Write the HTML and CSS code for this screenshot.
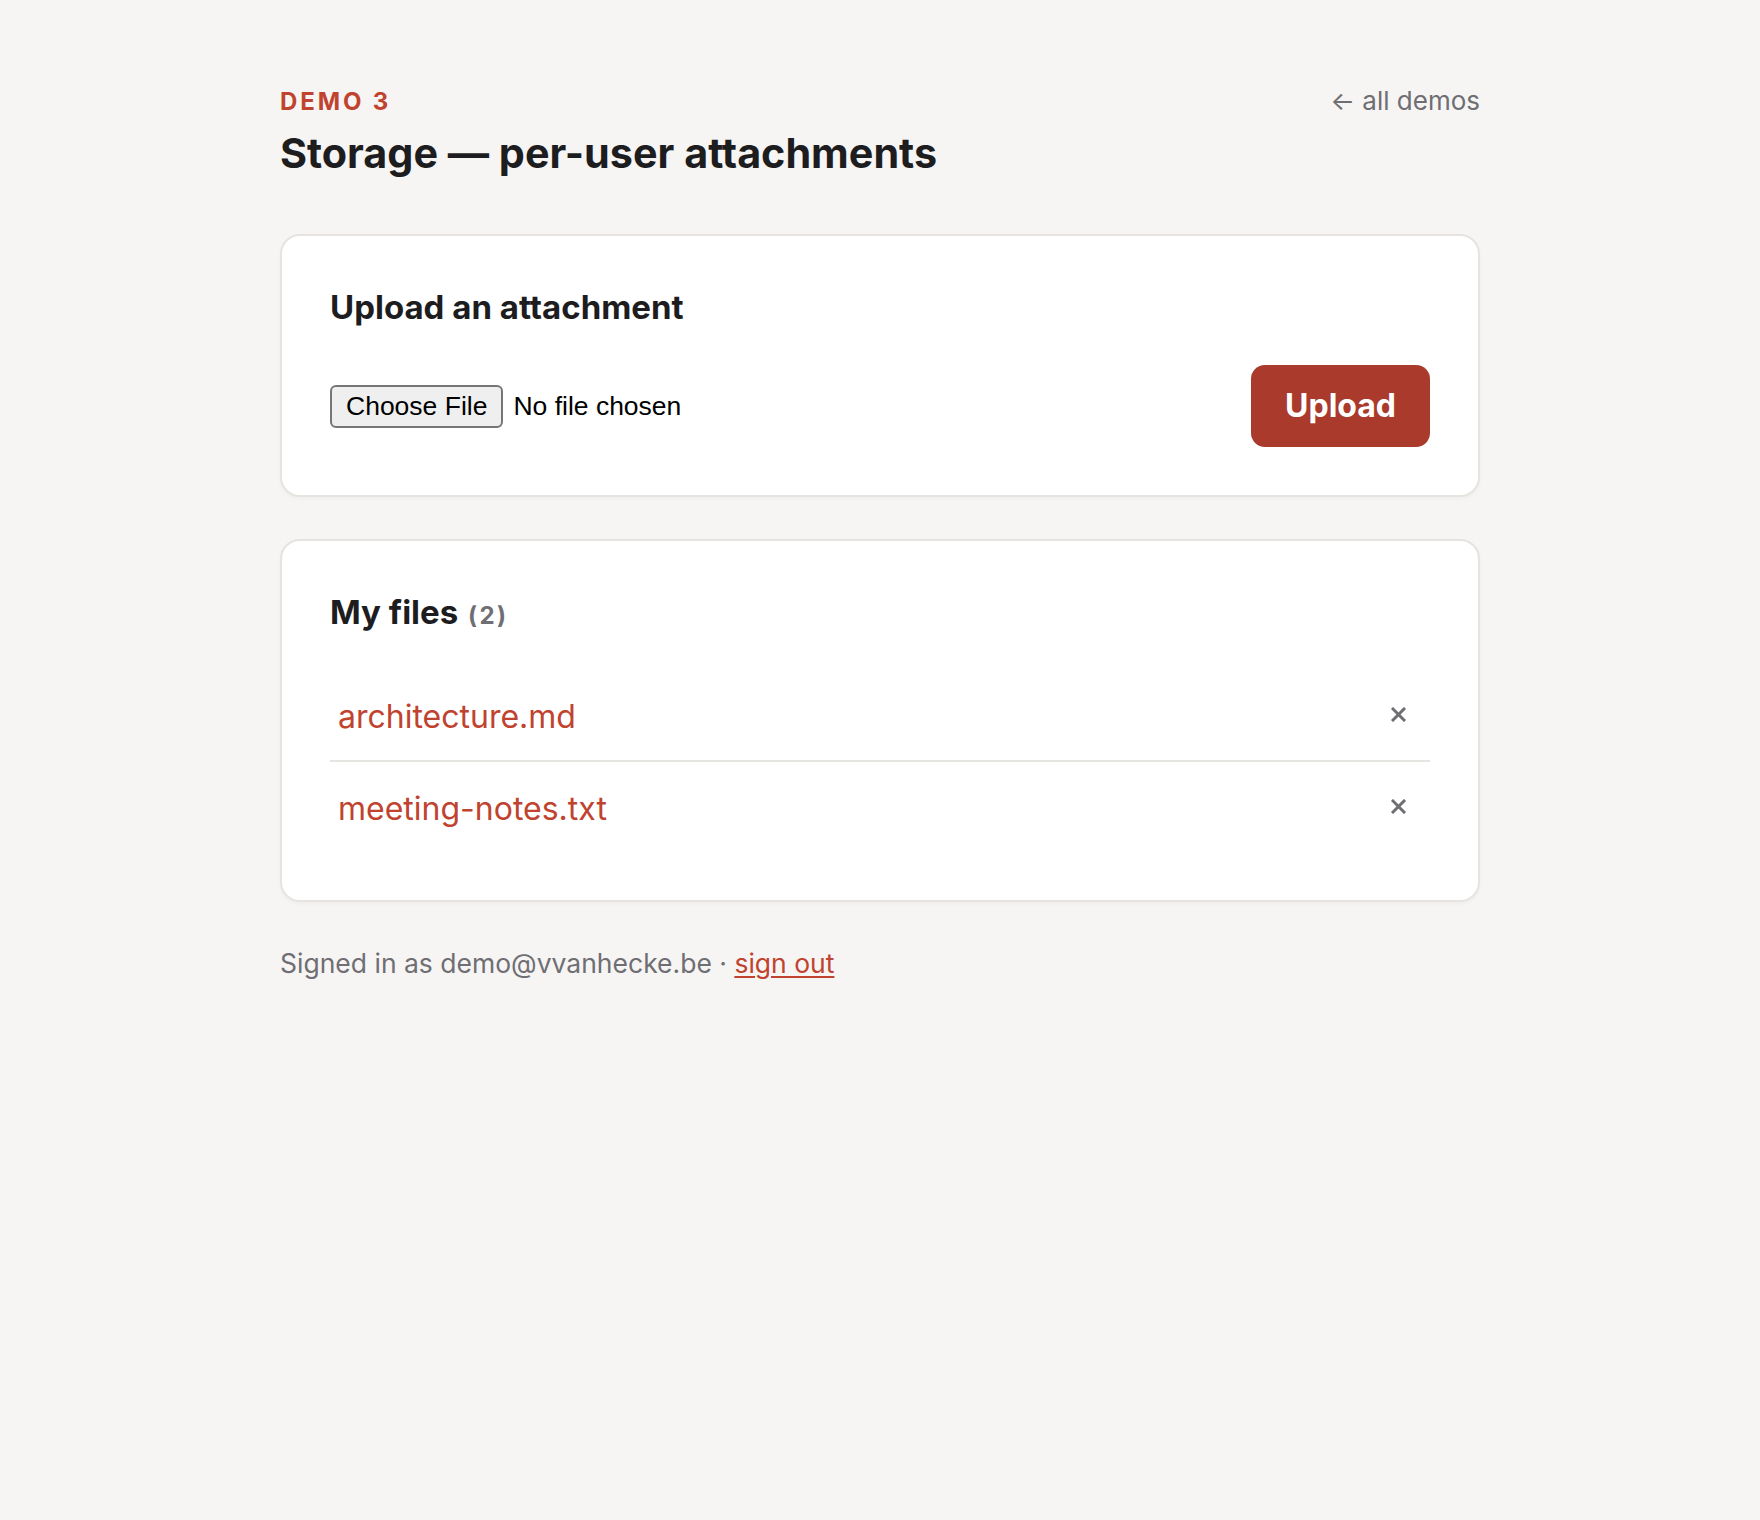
FILE: index.html
```html
<!DOCTYPE html>
<html lang="en">
<head>
    <meta charset="UTF-8">
    <meta name="viewport" content="width=device-width, initial-scale=1.0">
    <title>Storage — per-user attachments</title>
    <link rel="stylesheet" href="styles.css">
</head>
<body>
    <main class="page">
        <header class="page-header">
            <div class="page-title">
                <div class="eyebrow">Demo 3</div>
                <h1>Storage — per-user attachments</h1>
            </div>
            <a class="back-link" href="#">&larr; all demos</a>
        </header>

        <section class="card">
            <h2>Upload an attachment</h2>
            <form class="upload-row" onsubmit="return false">
                <input type="file" id="file-input">
                <button type="submit" class="btn-primary">Upload</button>
            </form>
        </section>

        <section class="card">
            <h2>My files <span class="count">(2)</span></h2>
            <ul class="file-list">
                <li class="file-item">
                    <a class="file-name" href="#">architecture.md</a>
                    <button class="btn-delete" title="Delete">
                        <svg width="15" height="15" viewBox="0 0 15 15" fill="none" stroke="currentColor" stroke-width="3" stroke-linecap="square">
                            <line x1="2" y1="2" x2="13" y2="13"></line>
                            <line x1="13" y1="2" x2="2" y2="13"></line>
                        </svg>
                    </button>
                </li>
                <li class="file-item">
                    <a class="file-name" href="#">meeting-notes.txt</a>
                    <button class="btn-delete" title="Delete">
                        <svg width="15" height="15" viewBox="0 0 15 15" fill="none" stroke="currentColor" stroke-width="3" stroke-linecap="square">
                            <line x1="2" y1="2" x2="13" y2="13"></line>
                            <line x1="13" y1="2" x2="2" y2="13"></line>
                        </svg>
                    </button>
                </li>
            </ul>
        </section>

        <p class="signed-in">Signed in as demo@vvanhecke.be &middot; <a href="#">sign out</a></p>
    </main>
</body>
</html>
```

FILE: styles.css
```css
:root {
    --bg-color: #f6f5f3;
    --card-color: #ffffff;
    --border-color: #e6e4e1;
    --text-color: #1d1d1f;
    --muted-color: #6e6e73;
    --accent-color: #c0432f;
    --button-color: #a93a2c;
}

body {
    margin: 0;
    background-color: var(--bg-color);
    color: var(--text-color);
    font-family: Inter, "Noto Sans", sans-serif;
}

.page {
    max-width: 1200px;
    margin: 0 auto;
    padding: 85px 0 80px;
}

.page-header {
    display: flex;
    justify-content: space-between;
    align-items: baseline;
    margin-bottom: 56px;
}

.eyebrow {
    font-size: 24px;
    line-height: 1.2;
    font-weight: 700;
    letter-spacing: 0.12em;
    text-transform: uppercase;
    color: var(--accent-color);
    margin-bottom: 12px;
}

.page-title h1 {
    margin: 0;
    font-size: 41.3px;
    line-height: 1.2;
    font-weight: 700;
}

.back-link {
    font-size: 26px;
    color: var(--muted-color);
    text-decoration: none;
}

.card {
    background-color: var(--card-color);
    border: 2px solid var(--border-color);
    border-radius: 20px;
    padding: 50px 48px 48px;
    box-shadow: 0 2px 4px rgba(0, 0, 0, 0.03);
}

.card + .card {
    margin-top: 42px;
}

.card h2 {
    margin: 0 0 36px;
    font-size: 33px;
    line-height: 1.3;
    font-weight: 700;
}

.count {
    margin-left: 2px;
    font-size: 24px;
    letter-spacing: 0.1em;
    color: var(--muted-color);
}

.upload-row {
    display: flex;
    justify-content: space-between;
    align-items: center;
}

#file-input {
    font-family: "Liberation Sans", Arial, sans-serif;
    font-size: 26.5px;
    color: #000;
}

#file-input::file-selector-button {
    font-family: "Liberation Sans", Arial, sans-serif;
    font-size: 26.5px;
    color: #000;
    background-color: #efefef;
    border: 2px solid #767676;
    border-radius: 6px;
    padding: 4px 14px;
    margin-right: 10px;
}

.btn-primary {
    font-family: Inter, "Noto Sans", sans-serif;
    font-size: 32px;
    line-height: 42px;
    font-weight: 700;
    color: #fff;
    background-color: var(--button-color);
    border: none;
    border-radius: 14px;
    padding: 20px 34px;
    cursor: pointer;
}

.file-list {
    list-style: none;
    margin: 0;
    padding: 0;
}

.file-item {
    display: flex;
    justify-content: space-between;
    align-items: center;
    padding: 16px 8px 18px;
    border-bottom: 2px solid var(--border-color);
}

.file-item:last-child {
    border-bottom: none;
}

.file-name {
    display: block;
    padding-top: 6px;
    font-size: 32px;
    line-height: 50px;
    color: var(--accent-color);
    text-decoration: none;
}

.btn-delete {
    display: flex;
    background: none;
    border: none;
    padding: 8px 16px;
    color: var(--muted-color);
    cursor: pointer;
}

.signed-in {
    margin: 42px 0 0;
    font-size: 26.5px;
    line-height: 1.5;
    color: var(--muted-color);
}

.signed-in a {
    color: var(--accent-color);
    text-decoration-thickness: 2px;
    text-underline-offset: 3px;
}
```
